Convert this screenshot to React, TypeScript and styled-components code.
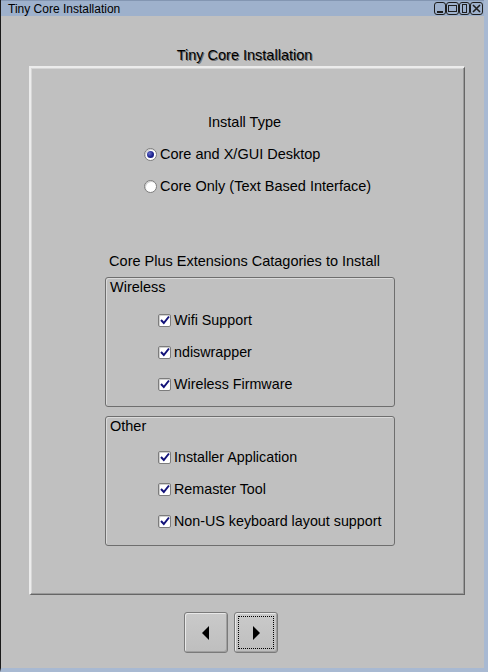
import React, { FC } from "react";
import styled, { createGlobalStyle } from "styled-components";

const GlobalStyle = createGlobalStyle`
  html, body {
    margin: 0;
    padding: 0;
    background: #c0c0c0;
  }
  body {
    font-family: "Liberation Sans", Arial, sans-serif;
    color: #000;
  }
`;

const Frame = styled.div`
  width: 488px;
  height: 672px;
  box-sizing: border-box;
  border-left: 1px solid #1a1a1a;
  border-right: 4px solid #a8b9d2;
  border-bottom: 4px solid #a8b9d2;
  background: #c0c0c0;
  display: flex;
  flex-direction: column;
  overflow: hidden;
`;

const TitleBar = styled.div`
  height: 16px;
  flex: none;
  display: flex;
  align-items: center;
  background: #9eb1cc;
  border-top: 1px solid #8396b2;
  box-sizing: border-box;
  padding-left: 7px;
  padding-right: 1px;
`;

const TitleText = styled.div`
  flex: 1;
  font-size: 12px;
  line-height: 14px;
  color: #000;
`;

const TitleButtons = styled.div`
  display: flex;
`;

const TitleButtonBox = styled.div<{ w: number }>`
  width: ${(p) => p.w}px;
  height: 13px;
  display: flex;
  align-items: center;
  justify-content: center;
`;

type Glyph = "min" | "max" | "restore" | "close";

const TitleButton: FC<{ glyph: Glyph; w?: number }> = ({ glyph, w = 12 }) => (
  <TitleButtonBox w={w}>
    <svg width={w} height={13} viewBox={`0 0 ${w} 13`}>
      <rect
        x={0.5}
        y={0.5}
        width={w - 1}
        height={12}
        rx={2.5}
        fill="none"
        stroke="#1e1e1e"
      />
      {glyph === "min" && <rect x={3} y={9} width={w - 6} height={2} fill="#1e1e1e" />}
      {glyph === "max" && (
        <rect x={2.5} y={3.5} width={w - 5} height={6} fill="none" stroke="#1e1e1e" />
      )}
      {glyph === "restore" && (
        <rect x={3.5} y={2.5} width={w - 7} height={8} fill="none" stroke="#1e1e1e" />
      )}
      {glyph === "close" && (
        <path
          d={`M3 3 L${w - 3} 10 M${w - 3} 3 L3 10`}
          stroke="#1e1e1e"
          strokeWidth={1.6}
        />
      )}
    </svg>
  </TitleButtonBox>
);

const Body = styled.div`
  flex: 1;
  display: flex;
  flex-direction: column;
  padding-top: 31px;
`;

const Column = styled.div`
  margin-left: 28px;
  width: 436px;
  display: flex;
  flex-direction: column;
`;

const Heading = styled.div`
  text-align: center;
  font-size: 14.5px;
  line-height: 16px;
  height: 16px;
  margin-right: 5px;
  color: #000;
  text-shadow: 1px 1px 0 #6e6e6e;
  margin-bottom: 3px;
`;

const Panel = styled.div`
  height: 529px;
  box-sizing: border-box;
  border-style: solid;
  border-width: 2px 1px 1px 2px;
  border-color: #ececec #666 #666 #ececec;
  box-shadow: inset -1px -1px 0 #9a9a9a, inset 1px 1px 0 #d6d6d6;
  padding-top: 46px;
  display: flex;
  flex-direction: column;
`;

const SectionLabel = styled.div<{ gap?: number }>`
  text-align: center;
  font-size: 14.5px;
  line-height: 16px;
  height: 16px;
  margin-right: 6px;
  margin-top: ${(p) => p.gap ?? 0}px;
`;

const RadioGroup = styled.div`
  margin-top: 8px;
  margin-left: 113px;
  display: flex;
  flex-direction: column;
`;

const OptionRow = styled.label`
  height: 32px;
  display: flex;
  align-items: center;
  font-size: 14.5px;
  gap: 3px;
  white-space: nowrap;
`;

const CheckRow = styled(OptionRow)`
  font-size: 14.3px;
`;

const RadioCircle = styled.span<{ checked?: boolean }>`
  width: 13px;
  height: 13px;
  box-sizing: border-box;
  border-radius: 50%;
  border: 1px solid #7c7c7c;
  background: #fff;
  box-shadow: inset 1px 1px 0 #d0d0d0;
  display: flex;
  align-items: center;
  justify-content: center;

  &::after {
    content: "";
    display: ${(p) => (p.checked ? "block" : "none")};
    width: 7px;
    height: 7px;
    border-radius: 50%;
    background: radial-gradient(circle at 35% 35%, #6a72c8 0, #1c2290 55%, #10146a 100%);
  }
`;

const CheckBox = styled.span`
  width: 13px;
  height: 13px;
  box-sizing: border-box;
  border-radius: 2px;
  border: 1px solid #7c7c7c;
  background: #fff;
  box-shadow: inset 1px 1px 0 #d0d0d0;
  display: flex;
  align-items: center;
  justify-content: center;
`;

const CheckMark: FC = () => (
  <svg width={10} height={10} viewBox="0 0 10 10">
    <path d="M1 5 L3.8 8 L9 1.5" fill="none" stroke="#12127a" strokeWidth={2} />
  </svg>
);

const GroupBox = styled.div<{ gap: number }>`
  margin-top: ${(p) => p.gap}px;
  margin-left: 74px;
  width: 290px;
  height: 130px;
  box-sizing: border-box;
  border: 1px solid #6e6e6e;
  border-radius: 3px;
  box-shadow: inset 1px 1px 0 #dadada;
  display: flex;
  flex-direction: column;
`;

const GroupTitle = styled.div`
  font-size: 14.5px;
  line-height: 16px;
  padding: 1px 0 0 4px;
`;

const CheckList = styled.div<{ gap: number }>`
  margin-top: ${(p) => p.gap}px;
  margin-left: 52px;
  display: flex;
  flex-direction: column;
`;

const ButtonBar = styled.div`
  margin-top: 17px;
  margin-left: 183px;
  display: flex;
  gap: 6px;
`;

const NavButton = styled.button<{ focused?: boolean }>`
  width: 44px;
  height: 41px;
  padding: 0;
  box-sizing: border-box;
  background: linear-gradient(#cacaca, #bebebe);
  border: 1px solid #7a7a7a;
  border-radius: 3px;
  box-shadow: inset 1px 1px 0 #e8e8e8, inset -1px -1px 0 #a0a0a0;
  display: flex;
  align-items: center;
  justify-content: center;
  position: relative;
  outline: none;

  &::after {
    content: "";
    display: ${(p) => (p.focused ? "block" : "none")};
    position: absolute;
    inset: 3px;
    border: 1px dotted #000;
  }
`;

const Arrow: FC<{ dir: "left" | "right" }> = ({ dir }) => (
  <svg width={8} height={14} viewBox="0 0 8 14">
    <path d={dir === "left" ? "M7 0 L0 7 L7 14 Z" : "M1 0 L8 7 L1 14 Z"} fill="#000" />
  </svg>
);

const wireless = ["Wifi Support", "ndiswrapper", "Wireless Firmware"];
const other = ["Installer Application", "Remaster Tool", "Non-US keyboard layout support"];

const Checks: FC<{ items: string[]; gap: number }> = ({ items, gap }) => (
  <CheckList gap={gap}>
    {items.map((item) => (
      <CheckRow key={item}>
        <CheckBox>
          <CheckMark />
        </CheckBox>
        {item}
      </CheckRow>
    ))}
  </CheckList>
);

export default function App() {
  return (
    <>
      <GlobalStyle />
      <Frame>
        <TitleBar>
          <TitleText>Tiny Core Installation</TitleText>
          <TitleButtons>
            <TitleButton glyph="min" />
            <TitleButton glyph="max" w={13} />
            <TitleButton glyph="restore" w={11} />
            <TitleButton glyph="close" w={13} />
          </TitleButtons>
        </TitleBar>
        <Body>
          <Column>
            <Heading>Tiny Core Installation</Heading>
            <Panel>
              <SectionLabel>Install Type</SectionLabel>
              <RadioGroup>
                <OptionRow>
                  <RadioCircle checked />
                  Core and X/GUI Desktop
                </OptionRow>
                <OptionRow>
                  <RadioCircle />
                  Core Only (Text Based Interface)
                </OptionRow>
              </RadioGroup>
              <SectionLabel gap={51}>Core Plus Extensions Catagories to Install</SectionLabel>
              <GroupBox gap={8}>
                <GroupTitle>Wireless</GroupTitle>
                <Checks items={wireless} gap={9} />
              </GroupBox>
              <GroupBox gap={9}>
                <GroupTitle>Other</GroupTitle>
                <Checks items={other} gap={7} />
              </GroupBox>
            </Panel>
          </Column>
          <ButtonBar>
            <NavButton>
              <Arrow dir="left" />
            </NavButton>
            <NavButton focused>
              <Arrow dir="right" />
            </NavButton>
          </ButtonBar>
        </Body>
      </Frame>
    </>
  );
}
